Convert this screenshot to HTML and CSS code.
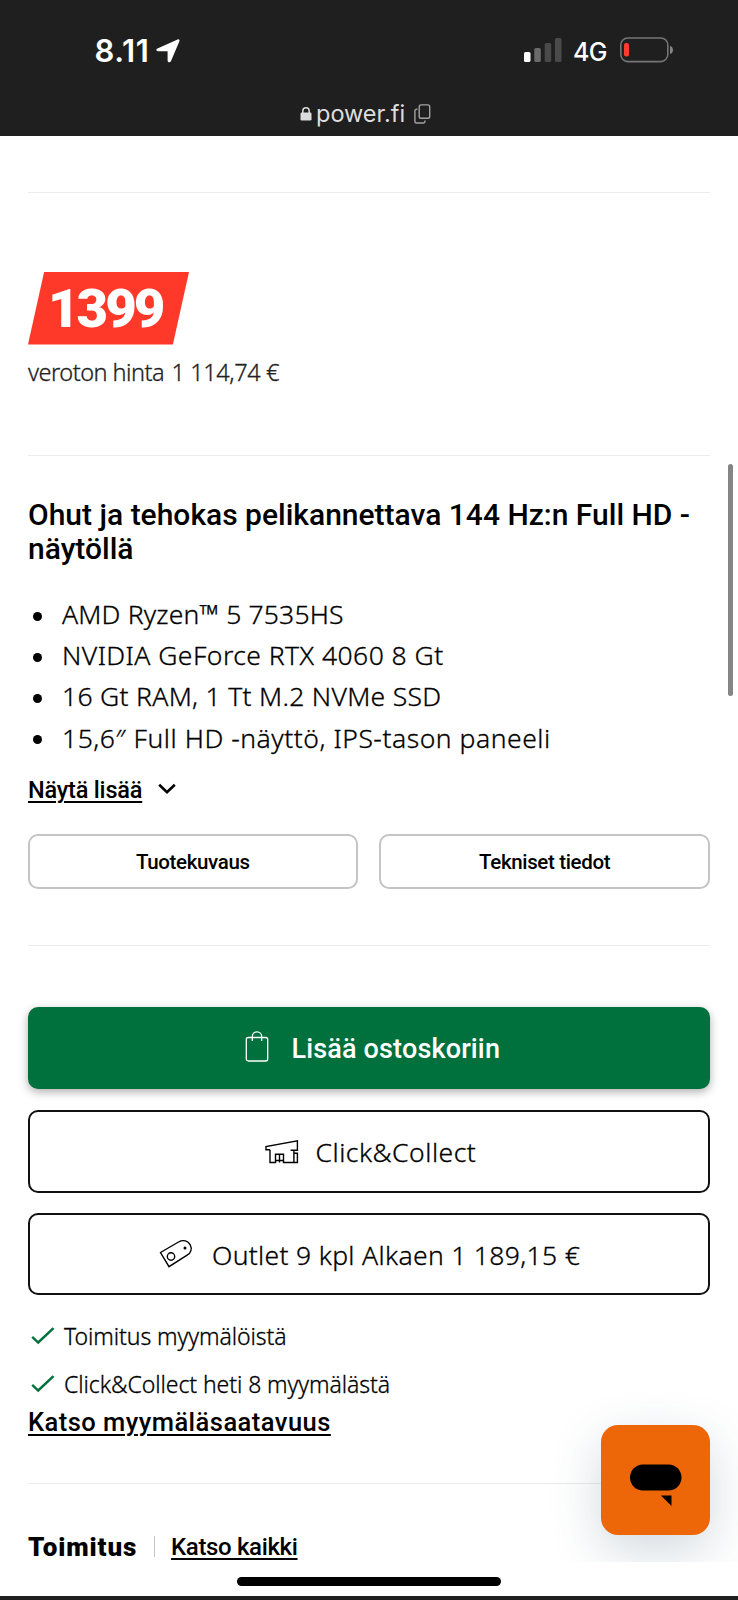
FILE: index.html
```html
<!DOCTYPE html>
<html lang="fi">
<head>
<meta charset="utf-8">
<title>power.fi</title>
<link rel="stylesheet" href="styles.css">
</head>
<body>
<header class="browser-bar">
  <div class="status">
    <div class="status-left">
      <span class="time">8.11</span>
      <svg class="location" width="26" height="26" viewBox="0 0 26 26"><path d="M2.500 10.600 22.600 1.400c1.300-.5 2.300.5 1.800 1.800L15.900 23.300c-.7 1.700-3.300 1.300-3.300-.7V13.200H3.200C1 13.200.7 11.400 2.500 10.600z" fill="#fff"/></svg>
    </div>
    <div class="status-right">
      <svg class="signal" width="38" height="24" viewBox="0 0 38 24"><rect x="0" y="14" width="6.500" height="10" rx="1.600" fill="#fff"/><rect x="10.300" y="10" width="6.500" height="14" rx="1.600" fill="#6b6b6b"/><rect x="20.700" y="5" width="6.500" height="19" rx="1.600" fill="#4a4a4a"/><rect x="31" y="0" width="6.500" height="24" rx="1.600" fill="#4a4a4a"/></svg>
      <span class="network">4G</span>
      <svg class="battery" width="54" height="26" viewBox="0 0 54 26"><rect x=".8" y="1" width="47" height="23.600" rx="7" fill="none" stroke="#757575" stroke-width="1.600"/><path d="M50 9c4 1 4 7 0 8z" fill="#858585"/><rect x="4" y="6" width="5" height="13.500" rx="2" fill="#ff3b30"/></svg>
    </div>
  </div>
  <div class="address">
    <svg width="12" height="14" viewBox="0 0 12 14"><path d="M2.800 6V4a3.200 3.200 0 0 1 6.400 0v2" fill="none" stroke="#dcdcdc" stroke-width="1.500"/><rect x=".5" y="5.500" width="11" height="8" rx="1.300" fill="#dcdcdc"/></svg>
    <span class="domain">power.fi</span>
    <svg class="copy" width="17" height="20" viewBox="0 0 17 20" fill="none" stroke="#a2a2a2" stroke-width="1.400"><rect x="5.200" y=".9" width="10.500" height="13.400" rx="1.800"/><path d="M3.400 5.200H2.600A1.700 1.700 0 0 0 .9 6.900v10.300a1.800 1.800 0 0 0 1.800 1.800h6.500a1.800 1.800 0 0 0 1.800-1.800v-.8"/></svg>
  </div>
</header>

<main class="page">
  <hr class="rule rule-top">
  <div class="price-tag">1399</div>
  <p class="vat"><span class="vat-label">veroton hinta</span>1&nbsp;114,74&nbsp;€</p>
  <hr class="rule rule-price">

  <h1 class="title">Ohut ja tehokas pelikannettava 144 Hz:n Full HD -<br>näytöllä</h1>
  <ul class="features">
    <li class="f1">AMD Ryzen™ 5 7535HS</li>
    <li class="f2">NVIDIA GeForce RTX 4060 8 Gt</li>
    <li class="f3">16 Gt RAM, 1 Tt M.2 NVMe SSD</li>
    <li class="f4">15,6″ Full HD -näyttö, IPS-tason paneeli</li>
  </ul>
  <div class="more">
    <a class="link more-link">Näytä lisää</a>
    <svg width="18" height="12" viewBox="0 0 18 12"><path d="M1.200 1.700 9 9.300l7.800-7.600" fill="none" stroke="#000" stroke-width="2.600"/></svg>
  </div>
  <div class="chips">
    <button class="chip">Tuotekuvaus</button>
    <button class="chip">Tekniset tiedot</button>
  </div>
  <hr class="rule rule-chips">

  <button class="action buy">
    <svg width="24" height="32" viewBox="0 0 24 32" fill="none" stroke="#fff" stroke-width="1.300"><rect x="1.300" y="7.500" width="21.400" height="23.500" rx="2"/><path d="M7.300 11V6.600a4.700 4.700 0 0 1 9.400 0V11"/></svg>
    <span class="buy-label">Lisää ostoskoriin</span>
  </button>
  <button class="action collect">
    <svg width="34" height="24" viewBox="0 0 34 24" fill="none" stroke="#000" stroke-width="1.400"><path d="M5 9.800H1V6.500L32.400.9v9.300h-6.800M5 9.800v12.700h5.500v-8.200h8v8.200h13.900v-9.300h-3.500v9.300M14.500 14.300v8.200M10.500 20.500h8M28.900 10.200v3"/></svg>
    <span class="collect-label">Click&amp;Collect</span>
  </button>
  <button class="action outlet">
    <svg width="34" height="30" viewBox="0 0 34 30" fill="none" stroke="#000" stroke-width="1.400"><path d="M1.500 13.500 19.500 3c5-2.800 9.600-1 11.600 2.700 2.200 4.200.8 8.300-3 10.500L10 27.700z"/><circle cx="12" cy="17.500" r="3.700"/><circle cx="26" cy="9" r=".8" fill="#000"/></svg>
    <span class="outlet-label">Outlet 9 kpl Alkaen 1 189,15 €</span>
  </button>

  <ul class="stock">
    <li><svg width="24" height="18" viewBox="0 0 24 18"><path d="m1.200 9.800 6 5.700L22.500 1.200" fill="none" stroke="#00713d" stroke-width="2.400"/></svg><span>Toimitus myymälöistä</span></li>
    <li><svg width="24" height="18" viewBox="0 0 24 18"><path d="m1.200 9.800 6 5.700L22.500 1.200" fill="none" stroke="#00713d" stroke-width="2.400"/></svg><span>Click&amp;Collect heti 8 myymälästä</span></li>
  </ul>
  <a class="link availability">Katso myymäläsaatavuus</a>
  <hr class="rule rule-stock">
  <div class="delivery">
    <h2 class="delivery-title">Toimitus</h2>
    <a class="link all-link">Katso kaikki</a>
  </div>

  <div class="chat"><svg width="110" height="110" viewBox="0 0 110 110"><rect x="29" y="39.500" width="51.500" height="26" rx="13"/><path d="M60 70.500h10.500V81z"/></svg></div>
</main>

<div class="scrollbar"></div>
<footer class="home"><span class="home-indicator"></span></footer>
</body>
</html>
```

FILE: styles.css
```css
* { box-sizing: border-box; }

body {
  margin: 0;
  position: relative;
  width: 738px;
  height: 1600px;
  display: flex;
  flex-direction: column;
  overflow: hidden;
  background: #fff;
  color: #000;
  font-family: Roboto, "Noto Sans", sans-serif;
}

svg { display: block; flex: none; }
button { font: inherit; color: inherit; background: #fff; padding: 0; white-space: nowrap; }
ul { list-style: none; margin: 0; padding: 0; }

/* Browser chrome */
.browser-bar {
  height: 135.5px;
  flex: none;
  background: #1f1f1f;
  color: #fff;
  font-family: Inter, sans-serif;
}
.status {
  display: flex;
  justify-content: space-between;
  height: 68px;
  padding: 33px 64px 0 94.500px;
}
.status-left, .status-right { display: flex; }
.time { width: 55px; font-size: 31px; line-height: 36px; font-weight: 600; letter-spacing: .6px; }
.location { margin: 5px 0 0 5.500px; }
.signal { margin-top: 5px; }
.network {
  margin: .5px 12.500px 0 11px;
  width: 34.500px;
  font-size: 25px;
  line-height: 36px;
  font-weight: 500;
  letter-spacing: -.6px;
}
.battery { margin-top: 4px; }
.address {
  display: flex;
  align-items: flex-start;
  padding: 32px 0 0 299.500px;
}
.address svg:first-child { margin-top: 7px; }
.domain {
  margin-left: 4.500px;
  width: 89.500px;
  font-size: 23.500px;
  line-height: 28px;
  letter-spacing: 0;
  color: #dedede;
}
.address .copy { margin: 4px 0 0 8.500px; }

/* Page */
.page {
  position: relative;
  height: 1426.500px;
  flex: none;
  overflow: hidden;
  padding: 0 28px;
}
.rule { height: 1px; border: 0; margin: 0 0 0 -.5px; background: #ebebeb; }
.rule-top { margin-top: 56.500px; }
.rule-price { margin-top: 65px; }
.rule-chips { margin-top: 56px; }
.rule-stock { margin-top: 46px; }

.price-tag {
  width: 161px;
  height: 72.500px;
  margin-top: 79px;
  padding-left: 20px;
  background: #ff3929;
  clip-path: polygon(10% 0, 100% 0, 90% 100%, 0 100%);
  color: #fff;
  font-weight: 900;
  font-size: 54.500px;
  line-height: 73px;
  letter-spacing: -3px;
}
.vat, .features, .action, .stock {
  font-family: "Noto Sans", sans-serif;
  font-weight: 300;
  -webkit-text-stroke: .3px currentColor;
}
.vat {
  display: flex;
  margin: 9.500px 0 0;
  font-size: 23.500px;
  line-height: 36px;
  letter-spacing: -.4px;
  color: #222;
}
.vat-label { width: 143.500px; letter-spacing: -.5px; }

.title {
  margin: 41.900px 0 0;
  font-size: 30px;
  line-height: 34.300px;
  font-weight: 500;
  white-space: nowrap;
}
.features { margin-top: 27.500px; font-size: 26.500px; line-height: 41.200px; }
.features li { display: flex; align-items: center; height: 41.200px; }
.features li::before {
  content: "";
  width: 9px;
  height: 9px;
  margin: 3px 20.500px 0 4.500px;
  border-radius: 50%;
  background: #000;
}
.f1 { letter-spacing: .17px; }
.f2 { letter-spacing: .45px; }
.f3 { letter-spacing: .3px; }
.f4 { letter-spacing: .53px; }

.link { text-decoration: underline; text-decoration-thickness: 2px; text-underline-offset: 3px; font-weight: 500; }
.more { display: flex; margin-top: 16.200px; height: 30px; }
.more-link { font-size: 23.500px; line-height: 30px; letter-spacing: -.2px; width: 130px; }
.more svg { margin-top: 8.500px; }

.chips { display: grid; grid-template-columns: 1fr 1fr; gap: 21px; margin: 29.500px 0 0 -.5px; }
.chip {
  height: 54.500px;
  border: 2px solid #c4c4c4;
  border-radius: 10px;
  font-weight: 500;
  font-size: 20.500px;
  letter-spacing: -.35px;
}

.action {
  display: flex;
  align-items: center;
  width: 100%;
  height: 82.500px;
  border: 2px solid #111;
  border-radius: 10px;
  font-size: 26.500px;
  line-height: 40px;
}
.buy {
  width: 682.500px;
  height: 82px;
  margin: 61.500px 0 0 -.5px;
  padding-left: 217.500px;
  border: 0;
  background: #00713d;
  color: #fff;
  box-shadow: 0 3px 10px rgba(0, 0, 0, .32);
  -webkit-text-stroke: 0;
}
.buy svg { margin-top: -4px; }
.buy-label { margin: 2px 0 0 22.500px; font: 500 27px/40px Roboto, sans-serif; letter-spacing: .15px; }
.collect { margin-top: 21px; padding-left: 235px; }
.collect-label { margin: 1px 0 0 16.500px; letter-spacing: .5px; }
.outlet { height: 82px; margin-top: 20.500px; padding-left: 129px; }
.outlet-label { margin: 1px 0 0 19px; letter-spacing: .32px; }

.stock { margin-top: 17.200px; font-size: 23px; line-height: 47.900px; }
.stock li { display: flex; height: 47.900px; letter-spacing: -.07px; }
.stock svg { margin: 14px 9px 0 3px; }
.availability { display: block; margin-top: -1.400px; font-size: 25.500px; line-height: 30px; letter-spacing: .47px; }

.delivery { display: flex; height: 34px; margin-top: 46px; line-height: 34px; }
.delivery-title { width: 126px; margin: 0; font-size: 26px; line-height: 34px; font-weight: 900; letter-spacing: .9px; }
.all-link {
  height: 34px;
  padding-left: 17px;
  background: linear-gradient(#c6c6c6, #c6c6c6) 0 6px / 1px 21px no-repeat;
  font-size: 24px;
  letter-spacing: -.35px;
}

.chat {
  position: absolute;
  left: 600.500px;
  top: 1289px;
  width: 109.500px;
  height: 110px;
  border-radius: 17px;
  background: #ed6608;
  box-shadow: 0 16px 50px rgba(50, 80, 105, .22);
}

.scrollbar {
  position: absolute;
  left: 727.500px;
  top: 464px;
  width: 5.500px;
  height: 232px;
  border-radius: 3px;
  background: #858585;
}

.home {
  height: 38px;
  flex: none;
  display: flex;
  justify-content: center;
  align-items: flex-start;
  padding-top: 15px;
  border-bottom: 4px solid #1f1f1f;
  background: #fff;
}
.home-indicator { width: 264px; height: 9px; border-radius: 5px; background: #000; }
```
